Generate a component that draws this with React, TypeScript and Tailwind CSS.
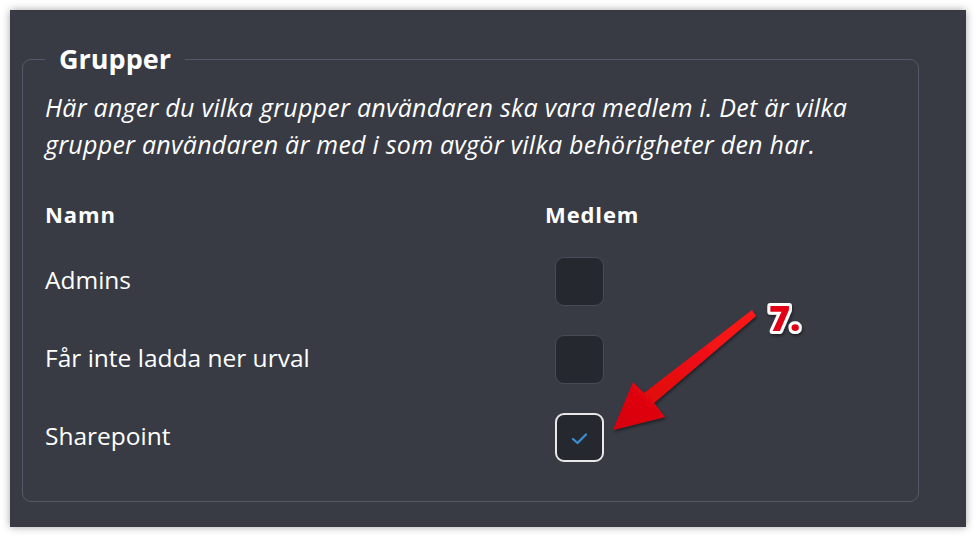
import React from "react";

const rows = [
  { name: "Admins", checked: false },
  { name: "Får inte ladda ner urval", checked: false },
  { name: "Sharepoint", checked: true },
];

function Box({ checked }: { checked: boolean }) {
  return (
    <div
      className={
        checked
          ? "w-[49px] h-[49px] rounded-[9px] bg-[#262830] border-2 border-[#e8e8e8] flex items-center justify-center"
          : "w-[49px] h-[49px] rounded-[9px] bg-[#262830] border border-[#474b55]"
      }
    >
      {checked && (
        <svg width="24" height="24" viewBox="0 0 24 24">
          <path d="M5 13 L9.5 17 L18 8.5" fill="none" stroke="#3b8fd0" strokeWidth="2.3" strokeLinecap="round" strokeLinejoin="round" />
        </svg>
      )}
    </div>
  );
}

export default function App() {
  return (
    <div className="relative w-[976px] h-[538px] bg-white pt-[10px] pl-[10px] pr-[10px] pb-[11px] font-['Open_Sans',sans-serif]">
      <div className="w-full h-full bg-[#383b44] shadow-[0_0_8px_rgba(0,0,0,0.35)] pt-[33px] pl-[12px] pr-[47px]">
        <fieldset className="border border-[#535968] rounded-[9px] pl-[22px] pr-[22px] pb-[20px] h-[459px]">
          <legend className="px-[14px] text-[27px] font-bold text-white leading-[32px]">Grupper</legend>
          <p className="italic text-[25px] leading-[37px] text-white mt-[14px] tracking-[0.25px]">
            Här anger du vilka grupper användaren ska vara medlem i. Det är vilka grupper användaren är med i som avgör vilka behörigheter den har.
          </p>
          <div className="grid grid-cols-[500px_auto] mt-[36px] text-white">
            <div className="text-[22px] font-bold leading-[30px] tracking-[0.9px]">Namn</div>
            <div className="text-[22px] font-bold leading-[30px] tracking-[0.9px]">Medlem</div>
            {rows.map((r, i) => (
              <React.Fragment key={i}>
                <div className={(i === 0 ? "mt-[28px]" : "mt-[29px]") + " text-[24.5px] h-[49px] flex items-center pb-[2px]"}>{r.name}</div>
                <div className={(i === 0 ? "mt-[28px]" : "mt-[29px]") + " pl-[10px]"}>
                  <Box checked={r.checked} />
                </div>
              </React.Fragment>
            ))}
          </div>
        </fieldset>
      </div>
      <svg className="absolute left-0 top-0 pointer-events-none" width="976" height="538" viewBox="0 0 976 538">
        <defs>
          <linearGradient id="ag" x1="0" y1="1" x2="1" y2="0">
            <stop offset="0" stopColor="#d6000a" />
            <stop offset="1" stopColor="#ff1a1a" />
          </linearGradient>
          <filter id="sh" x="-20%" y="-20%" width="140%" height="140%">
            <feDropShadow dx="1" dy="2" stdDeviation="1.5" floodColor="#000" floodOpacity="0.45" />
          </filter>
        </defs>
        <polygon
          points="613,430 633,382 644,393 752,310 756,316 654,403 665,417"
          fill="url(#ag)"
          filter="url(#sh)"
          strokeLinejoin="round"
        />
        <text
          x="769"
          y="331"
          fontSize="36"
          fontWeight="900"
          fontFamily="'Open Sans', sans-serif"
          fill="#e30613"
          stroke="white"
          strokeWidth="6"
          paintOrder="stroke"
          strokeLinejoin="round"
          filter="url(#sh)"
        >
          7.
        </text>
      </svg>
    </div>
  );
}
